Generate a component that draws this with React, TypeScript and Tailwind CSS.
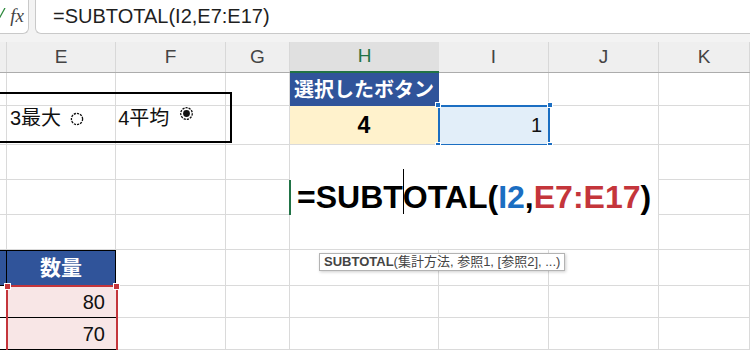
import React from 'react';

const font = { fontFamily: '"Liberation Sans", "Noto Sans CJK JP", sans-serif' };

const line = 'border-r border-b border-[#dadada]';

const Plain: React.FC = () => <div className={line}></div>;

const Handle: React.FC<{ className: string }> = ({ className }) => (
  <div className={`absolute w-[6px] h-[6px] border border-white ${className}`}></div>
);

const RadioEmpty: React.FC = () => (
  <svg width="14" height="14" viewBox="0 0 14 14" className="ml-[9px] mt-[2px]">
    <circle cx="7" cy="7" r="5.6" fill="white" stroke="#111" strokeWidth="1.3" strokeDasharray="2.2 1" />
  </svg>
);

const RadioOn: React.FC = () => (
  <svg width="15" height="15" viewBox="0 0 15 15" className="ml-[10px] -mt-[9px]">
    <circle cx="7.5" cy="7.5" r="5.8" fill="white" stroke="#111" strokeWidth="1.3" strokeDasharray="2.2 1" />
    <circle cx="7.5" cy="7.5" r="3.4" fill="#111" />
  </svg>
);

const App: React.FC = () => {
  const headers = ['', 'E', 'F', 'G', 'H', 'I', 'J', 'K'];

  return (
    <div className="relative w-[750px] h-[350px] overflow-hidden bg-white" style={font}>
      {/* Formula bar */}
      <div className="h-[34px] bg-[#f3f3f3] flex">
        <div className="relative w-[29px] -mt-[2px] bg-white border-r border-b border-[#c9c9c9] rounded-br-[6px] flex items-center justify-end pr-[4px]">
          <svg width="6" height="10" viewBox="0 0 6 10" className="absolute left-0 top-[10px]">
            <path d="M-4 5 L0 9 L5 0" fill="none" stroke="#2f8a3e" strokeWidth="1.3" />
          </svg>
          <span className="text-[19px] italic text-[#444] leading-none" style={{ fontFamily: '"Liberation Serif", serif' }}>fx</span>
        </div>
        <div className="w-[6px]"></div>
        <div className="flex-1 -mt-[2px] bg-white border-l border-b border-[#c9c9c9] rounded-bl-[6px] flex items-center pl-[17px]">
          <span className="text-[20px] text-[#1f1f1f]">=SUBTOTAL(I2,E7:E17)</span>
        </div>
      </div>

      <div className="h-[8px] bg-[#f3f3f3]"></div>

      {/* Column headers */}
      <div className="grid grid-cols-[7px_109px_110px_64px_149px_110px_110px_91px] h-[31px] bg-[#efefef] border-b border-[#acacac]">
        {headers.map((h) => (
          <div
            key={h || 'D'}
            className={
              h === 'H'
                ? 'flex items-center justify-center bg-[#e0e0e0] border-b-2 border-[#217346] text-[19px] text-[#217346] -mb-px'
                : 'flex items-center justify-center border-r border-[#d8d8d8] text-[19px] text-[#444]'
            }
          >
            {h}
          </div>
        ))}
      </div>

      {/* Sheet */}
      <div className="grid grid-cols-[7px_109px_110px_64px_149px_110px_110px_91px] grid-rows-[33px_39px_35px_35px_35px_36px_32px_32px]">
        {/* row 1 */}
        <Plain /><Plain /><Plain /><Plain />
        <div className="bg-[#30549a] flex items-center justify-center text-white font-bold text-[20px] border-r border-[#30549a]">
          選択したボタン
        </div>
        <Plain /><Plain /><Plain />

        {/* row 2 */}
        <Plain /><Plain /><Plain /><Plain />
        <div className={`bg-[#fff2cc] flex items-center justify-center font-bold text-[23px] text-black ${line}`}>4</div>
        <div className={`relative bg-[#e2eef9] flex items-center justify-end pr-[6px] text-[20px] text-[#111] ${line}`}>
          1
          <div className="absolute -left-[1px] -top-[1px] w-[112px] h-[41px] border-2 border-[#1b6ec2]"></div>
          <Handle className="-left-[4px] -top-[4px] bg-[#1b6ec2]" />
          <Handle className="-right-[5px] -top-[4px] bg-[#1b6ec2]" />
          <Handle className="-left-[4px] -bottom-[4px] bg-[#1b6ec2]" />
          <Handle className="-right-[5px] -bottom-[4px] bg-[#1b6ec2]" />
        </div>
        <Plain /><Plain />

        {/* row 3 - 5, cell editor over H:J */}
        <Plain /><Plain /><Plain /><Plain />
        <div className="relative col-span-3 row-span-3 bg-white border-r border-b border-[#dadada] flex items-center pl-[7px]">
          <div className="absolute -left-[1px] top-[35px] w-[2px] h-[35px] bg-[#217346]"></div>
          <span className="text-[32px] font-bold text-black leading-none">
            =SUBT
            <span className="relative">
              <span className="absolute left-0 -top-[10px] w-px h-[45px] bg-black"></span>
            </span>
            OTAL(
            <span className="text-[#1b6ec2]">I2</span>,
            <span className="text-[#c4353b]">E7:E17</span>)
          </span>
        </div>
        <Plain />
        <Plain /><Plain /><Plain /><Plain /><Plain />
        <Plain /><Plain /><Plain /><Plain /><Plain />

        {/* row 6 */}
        <div className="bg-[#30549a] border-t border-r border-b border-black"></div>
        <div className="bg-[#30549a] border-t border-r border-b border-black flex items-center justify-center text-white font-bold text-[21px]">
          数量
        </div>
        <Plain /><Plain /><Plain /><Plain /><Plain /><Plain />

        {/* row 7 */}
        <div className="border-b border-black"></div>
        <div className="bg-[#f8e6e6] border-b border-black flex items-center justify-end pr-[11px] text-[20px] text-[#111]">80</div>
        <Plain /><Plain /><Plain /><Plain /><Plain /><Plain />

        {/* row 8 */}
        <div className="border-b border-black"></div>
        <div className="bg-[#f8e6e6] border-b border-black flex items-center justify-end pr-[11px] text-[20px] text-[#111]">70</div>
        <Plain /><Plain /><Plain /><Plain /><Plain /><Plain />
      </div>

      {/* Option button group box */}
      <div className="absolute -left-[2px] top-[92px] w-[234px] h-[51px] border-2 border-black flex items-center pl-[10px] text-[20px] text-[#111]">
        <span>3最大</span>
        <RadioEmpty />
        <span className="ml-[34px]">4平均</span>
        <RadioOn />
      </div>

      {/* Reference range E7:E17 */}
      <div className="absolute left-[6px] top-[285px] w-[112px] h-[80px] border-2 border-[#c4353b]"></div>
      <div className="absolute left-[4px] top-[283px] w-[7px] h-[7px] bg-[#c4353b] border border-white"></div>
      <div className="absolute left-[113px] top-[283px] w-[7px] h-[7px] bg-[#c4353b] border border-white"></div>

      {/* Function tooltip */}
      <div className="absolute left-[319px] top-[253px] h-[18px] px-[4px] bg-white border border-[#b3b3b3] shadow-[1px_1px_3px_rgba(0,0,0,0.2)] flex items-center text-[13px] text-[#444] whitespace-nowrap">
        <span className="font-bold">SUBTOTAL</span>
        <span>(集計方法, 参照1, [参照2], ...)</span>
      </div>
    </div>
  );
};

export default App;
